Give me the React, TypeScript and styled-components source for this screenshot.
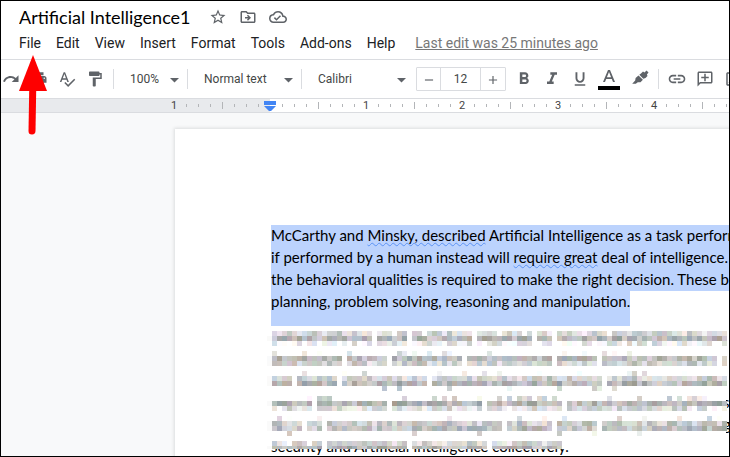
import React from "react";
import styled, { createGlobalStyle } from "styled-components";
import {
  MdStarBorder,
  MdOutlineDriveFileMove,
  MdOutlineCloudDone,
  MdRedo,
  MdPrint,
  MdSpellcheck,
  MdFormatPaint,
  MdFormatBold,
  MdFormatItalic,
  MdFormatUnderlined,
  MdLink,
  MdOutlineAddComment,
  MdOutlineImage,
  MdAdd,
  MdRemove,
} from "react-icons/md";

const GlobalStyle = createGlobalStyle`
  *, *::before, *::after { box-sizing: border-box; }
  body { margin: 0; background: #fff; font-family: Roboto, "Liberation Sans", sans-serif; }
  button, input, select { font: inherit; color: inherit; margin: 0; padding: 0; border: 0; background: none; }
`;

const Frame = styled.div`
  position: relative;
  display: flex;
  flex-direction: column;
  height: 100vh;
  overflow: hidden;
  border: 1px solid #000;
`;

const Header = styled.header`
  flex: none;
  padding: 3px 0 4px 11px;
  border-bottom: 1px solid #dadce0;
`;

const TitleRow = styled.div`
  display: flex;
  align-items: center;
  height: 26px;
  color: #5f6368;
`;

const TitleInput = styled.input`
  width: 190px;
  height: 24px;
  padding-left: 7px !important;
  font-family: Lato, sans-serif !important;
  font-size: 18px !important;
  color: #000 !important;
`;

const IconButton = styled.button<{ $width?: number; $size?: number }>`
  flex: none;
  display: inline-flex;
  align-items: center;
  justify-content: center;
  width: ${(p) => p.$width ?? 30}px;
  height: 24px;
  color: #5f6368;
  svg {
    flex: none;
    width: ${(p) => p.$size ?? 18}px;
    height: ${(p) => p.$size ?? 18}px;
  }
`;

const MirroredButton = styled(IconButton)`
  svg { transform: scaleX(-1); }
`;

const MenuRow = styled.nav`
  display: flex;
  align-items: center;
  gap: 1px;
  height: 25px;
  font-size: 14px;
  color: #202124;
`;

const MenuButton = styled.button`
  flex: none;
  height: 24px;
  padding: 0 7px !important;
`;

const EditLink = styled.a`
  flex: none;
  margin-left: 12px;
  color: #777;
  text-decoration: underline;
  white-space: nowrap;
`;

const Toolbar = styled.div`
  flex: none;
  display: flex;
  align-items: center;
  height: 38px;
  overflow: hidden;
  font-size: 12px;
  color: #444746;
`;

const Group = styled.div<{ $start?: number }>`
  flex: none;
  display: flex;
  align-items: center;
  margin-left: ${(p) => p.$start ?? 0}px;
`;

const Divider = styled.span`
  flex: none;
  width: 1px;
  height: 20px;
  background: #dadce0;
`;

const SelectBox = styled.label<{ $width: number }>`
  flex: none;
  display: flex;
  align-items: center;
  width: ${(p) => p.$width}px;
  padding: 0 8px 0 16px;
  svg { flex: none; width: 9px; height: 5px; fill: #5f6368; margin-top: 2px; }
  select { flex: 1; min-width: 0; appearance: none; outline: 0; }
`;

const SizeStepper = styled.div`
  flex: none;
  display: flex;
  margin-left: 2px;
  height: 24px;
  border: 1px solid #dadce0;
  border-radius: 1px;
  input {
    width: 41px;
    text-align: center;
    border-left: 1px solid #dadce0;
    border-right: 1px solid #dadce0;
  }
`;

const ColorButton = styled(IconButton)`
  flex-direction: column;
  height: 26px;
  &::after { content: ""; flex: none; width: 22px; height: 4px; background: #000; }
  svg { width: 12px; height: 16px; margin-bottom: 2px; }
`;

const Ruler = styled.div`
  flex: none;
  display: flex;
  height: 15px;
  padding-left: 167px;
  overflow: hidden;
  border-top: 1px solid #dadce0;
  border-bottom: 1px solid #dadce0;
  background: linear-gradient(to right, #e8eaed 269px, #fff 269px);
`;

const Tick = styled.span<{ $height: number }>`
  flex: none;
  display: flex;
  align-items: center;
  justify-content: center;
  width: 12px;
  font-size: 11px;
  line-height: 13px;
  color: #444;
  &::before {
    content: "";
    width: ${(p) => (p.$height ? 1 : 0)}px;
    height: ${(p) => p.$height}px;
    background: #b3b5b8;
  }
  svg { flex: none; width: 12px; height: 12px; }
`;

const Workspace = styled.main`
  flex: 1;
  min-height: 0;
  overflow: hidden;
  padding: 16px 0 0 174px;
  background: #f8f9fa;
`;

const Page = styled.article`
  width: 816px;
  min-height: 1056px;
  padding: 96px;
  background: #fff;
  box-shadow: 0 0 3px 1px rgba(60, 64, 67, 0.15);
  font-family: Lato, Carlito, sans-serif;
  font-size: 15px;
  line-height: 20px;
  color: #000;
`;

const Selected = styled.p`
  margin: 0;
  white-space: nowrap;
`;

const Line = styled.span<{ $last?: boolean }>`
  display: ${(p) => (p.$last ? "table" : "block")};
  padding-bottom: ${(p) => (p.$last ? 15 : 2)}px;
  background: #bcd3fd;
`;

const Grammar = styled.span`
  text-decoration: underline wavy #5b93f5 1px;
  text-underline-offset: 1px;
  text-decoration-skip-ink: none;
`;

const Obscured = styled.section`
  position: relative;
  padding-top: 110px;
  p { margin: 0; }
`;

const MosaicArt = styled.svg`
  position: absolute;
  top: 5px;
  left: -4px;
  width: 470px;
  height: 118px;
`;

const Arrow = styled.svg`
  position: absolute;
  top: 54px;
  left: 17px;
  width: 30px;
  height: 82px;
  pointer-events: none;
`;

const Caret = () => (
  <svg viewBox="0 0 9 5" aria-hidden="true"><path d="M0 0h9L4.500 4.500z" /></svg>
);

const menus = ["File", "Edit", "View", "Insert", "Format", "Tools", "Add-ons", "Help"];

// Each block row: top edge, coverage of the row, base lightness; gaps are the columns between words.
const blockRows = [
  { gaps: [20, 27, 40, 52, 56], rows: [[0, 0.97, 216], [5, 1, 184], [10, 0.9, 232]] },
  { gaps: [14, 23, 38, 56, 65, 89], rows: [[20, 0.28, 228], [25, 1, 186], [30, 1, 208]] },
  { gaps: [4, 13, 31, 66], rows: [[40, 0.14, 234], [45, 1, 210], [50, 1, 182], [55, 0.08, 220]] },
  { gaps: [8, 23, 42, 58], rows: [[65, 0.3, 224], [70, 1, 182], [75, 0.97, 220]] },
  { gaps: [6, 10, 46, 56, 65], rows: [[85, 0.25, 232], [90, 1, 204], [95, 1, 194], [100, 0.08, 226]] },
  { gaps: [10, 27, 43], rows: [[110, 0.97, 216], [115, 1, 182]] },
];

const noise = (n: number) => {
  const v = Math.sin(n * 12.9898 + 4.137) * 43758.5453;
  return v - Math.floor(v);
};

const Mosaic = () => {
  const cells: React.ReactNode[] = [];
  blockRows.forEach((line, l) => {
    line.rows.forEach(([top, cover, base], r) => {
      const end = l === 5 ? 58 : 91;
      for (let c = -1; c < end; c++) {
        const seed = c * 7 + l * 1013 + r * 211;
        if (line.gaps.includes(c) || noise(seed + 3) > cover) continue;
        if (c === -1 && base > 212) continue;
        const edge = c === -1;
        const level = edge ? 250 : base + (noise(seed) - 0.5) * 54;
        const spread = edge ? 2 : 32;
        const channel = (shift: number) =>
          Math.min(255, Math.round(level + (noise(seed + shift) - 0.5) * spread));
        cells.push(
          <rect
            key={`${l}-${r}-${c}`}
            x={5 + c * 5}
            y={top}
            width="5"
            height="5"
            fill={`rgb(${channel(1)},${Math.min(255, Math.round(level))},${channel(2)})`}
          />
        );
      }
    });
  });
  return (
    <MosaicArt viewBox="0 0 470 118" shapeRendering="crispEdges" role="img" aria-label="Obscured paragraph">
      <text x="456" y="77">s</text>
      <text x="456" y="99">g</text>
      <rect width="459" height="118" fill="#fff" />
      {cells}
    </MosaicArt>
  );
};

const TextColorIcon = () => (
  <svg viewBox="0 0 12 16" aria-hidden="true">
    <path fill="currentColor" d="M5 2h2l5 12h-2L8.800 11H3.200L2 14H0zM3.900 9.300h4.200L6 4z" />
  </svg>
);

const HighlightIcon = () => (
  <svg viewBox="0 0 18 18" aria-hidden="true" fill="currentColor">
    <path d="M10 3.500 12 1.500l1.500 1L15.500.5l2 2-1.600 2 .6 1.400-2 2-2.200.8-4-4z" />
    <path d="M7.500 5.500 11.900 9.800 9.500 12.200H6.800L4.800 13.800H1.200l3-3.200.4-2.500z" />
  </svg>
);

export default function App() {
  return (
    <>
      <GlobalStyle />
      <Frame>
        <Header>
          <TitleRow>
            <TitleInput aria-label="Document title" defaultValue="Artificial Intelligence1" />
            <Group $start={1}>
              <IconButton aria-label="Star"><MdStarBorder /></IconButton>
              <IconButton aria-label="Move"><MdOutlineDriveFileMove /></IconButton>
              <IconButton aria-label="Saved to cloud"><MdOutlineCloudDone /></IconButton>
            </Group>
          </TitleRow>
          <MenuRow>
            {menus.map((m) => <MenuButton key={m}>{m}</MenuButton>)}
            <EditLink href="#history">Last edit was 25 minutes ago</EditLink>
          </MenuRow>
        </Header>

        <Toolbar role="toolbar" aria-label="Formatting">
          <Group $start={-4}>
            <IconButton $width={28} aria-label="Redo"><MdRedo /></IconButton>
            <IconButton $width={28} aria-label="Print"><MdPrint /></IconButton>
            <IconButton $width={28} aria-label="Spelling check"><MdSpellcheck /></IconButton>
            <IconButton $width={28} aria-label="Paint format"><MdFormatPaint /></IconButton>
          </Group>
          <Group $start={4}>
            <Divider />
            <SelectBox $width={73}>
              <select aria-label="Zoom"><option>100%</option></select><Caret />
            </SelectBox>
            <Divider />
            <SelectBox $width={113}>
              <select aria-label="Paragraph style"><option>Normal text</option></select><Caret />
            </SelectBox>
            <Divider />
            <SelectBox $width={112}>
              <select aria-label="Font"><option>Calibri</option></select><Caret />
            </SelectBox>
          </Group>
          <SizeStepper>
            <IconButton $width={23} $size={14} aria-label="Decrease font size"><MdRemove /></IconButton>
            <input aria-label="Font size" defaultValue="12" />
            <IconButton $width={24} $size={14} aria-label="Increase font size"><MdAdd /></IconButton>
          </SizeStepper>
          <Group $start={4}>
            <IconButton $width={28} $size={20} aria-label="Bold"><MdFormatBold /></IconButton>
            <IconButton $width={28} $size={20} aria-label="Italic"><MdFormatItalic /></IconButton>
            <IconButton $width={28} aria-label="Underline"><MdFormatUnderlined /></IconButton>
            <ColorButton $width={30} aria-label="Text color"><TextColorIcon /></ColorButton>
            <IconButton $width={32} aria-label="Highlight color"><HighlightIcon /></IconButton>
          </Group>
          <Group $start={2}>
            <Divider />
            <Group $start={4}>
              <IconButton $width={28} $size={20} aria-label="Insert link"><MdLink /></IconButton>
              <MirroredButton $width={28} aria-label="Add comment"><MdOutlineAddComment /></MirroredButton>
              <IconButton $width={28} aria-label="Insert image"><MdOutlineImage /></IconButton>
            </Group>
          </Group>
        </Toolbar>

        <Ruler>
          {Array.from({ length: 73 }, (_, i) => {
            const whole = i % 8 === 0;
            return (
              <Tick key={i} $height={whole ? 0 : i % 4 === 0 ? 7 : 3}>
                {whole && i !== 8 && Math.abs(i / 8 - 1)}
                {i === 8 && (
                  <svg viewBox="0 0 12 12" fill="#4285f4" aria-hidden="true">
                    <path d="M0 1h12v4H0zM0 6h12l-5 5H5z" />
                  </svg>
                )}
              </Tick>
            );
          })}
        </Ruler>

        <Workspace>
          <Page>
            <Selected>
              <Line>McCarthy and <Grammar>Minsky, described</Grammar> Artificial Intelligence as a task performed</Line>
              <Line>if performed by a human instead will <Grammar>require great</Grammar> deal of intelligence.</Line>
              <Line>the behavioral qualities is required to make the right decision. These be</Line>
              <Line $last>planning, problem solving, reasoning and manipulation.</Line>
            </Selected>
            <Obscured>
              <p>security and Artificial Intelligence collectively.</p>
              <Mosaic />
            </Obscured>
          </Page>
        </Workspace>

        <Arrow viewBox="0 0 30 82" aria-hidden="true">
          <path d="M15 18 14 76" stroke="#fe0000" strokeWidth="7" strokeLinecap="round" />
          <path d="M15 0 29 36 1 36z" fill="#fe0000" />
        </Arrow>
      </Frame>
    </>
  );
}
